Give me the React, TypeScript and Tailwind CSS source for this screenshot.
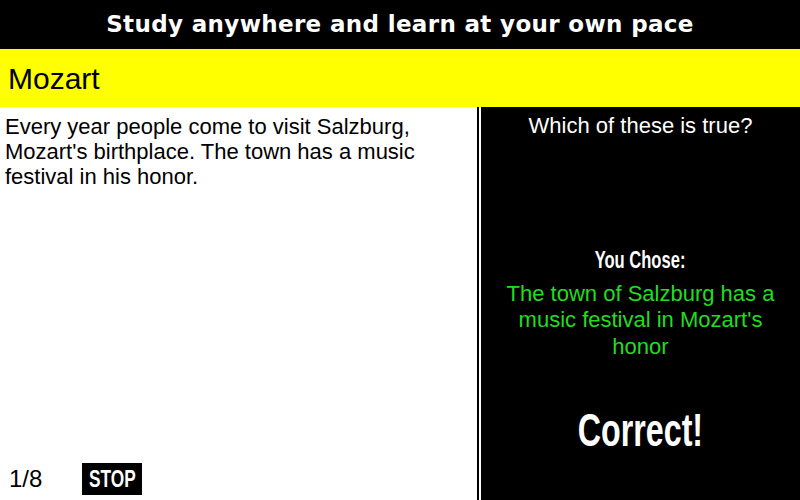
import React from 'react';

interface Card {
    topic: string;
    passage: string;
    question: string;
    chosen: string;
    verdict: string;
    position: string;
}

const CARD: Card = {
    topic: 'Mozart',
    passage: "Every year people come to visit Salzburg, Mozart's birthplace. The town has a music festival in his honor.",
    question: 'Which of these is true?',
    chosen: "The town of Salzburg has a music festival in Mozart's honor",
    verdict: 'Correct!',
    position: '1/8',
};

const sans = "font-['Liberation_Sans',Arial,sans-serif]";

export default function App() {
    return (
        <div className={`w-[800px] h-[500px] flex flex-col bg-white overflow-hidden ${sans}`}>
            <header className="h-[49px] bg-black flex items-center justify-center">
                <h1 className="text-white text-[23px] font-bold font-['DejaVu_Sans',sans-serif] tracking-[0.35px]">
                    Study anywhere and learn at your own pace
                </h1>
            </header>
            <div className="h-[58px] bg-[#ffff00] flex items-center px-2">
                <h2 className="text-[30px] text-black">{CARD.topic}</h2>
            </div>
            <div className="flex flex-1 min-h-0">
                <section className="w-[477px] flex flex-col justify-between pl-[5px] pt-[7px] pb-[3px]">
                    <p className="text-[22px] leading-[25px] text-black pr-6">{CARD.passage}</p>
                    <div className="flex items-center gap-[40px] pl-[4px]">
                        <span className="text-[24px] text-black">{CARD.position}</span>
                        <button className="bg-black text-white h-[32px] w-[60px] flex items-center justify-center">
                            <span className="inline-block text-[24px] font-bold leading-none scale-x-[0.72]">STOP</span>
                        </button>
                    </div>
                </section>
                <div className="w-[2px] bg-black" />
                <div className="w-[2px] bg-white" />
                <section className="flex-1 bg-black flex flex-col items-center text-center pt-[6px]">
                    <p className="text-white text-[22px] leading-[26px]">{CARD.question}</p>
                    <p className="text-white text-[23px] font-bold mt-[104px] scale-x-[0.72]">You Chose:</p>
                    <p className="text-[#21dd21] text-[22px] leading-[26.5px] mt-[3px] px-5">{CARD.chosen}</p>
                    <p className="text-white text-[46px] font-bold mt-[47px] scale-x-[0.7] leading-none">{CARD.verdict}</p>
                </section>
            </div>
        </div>
    );
}
